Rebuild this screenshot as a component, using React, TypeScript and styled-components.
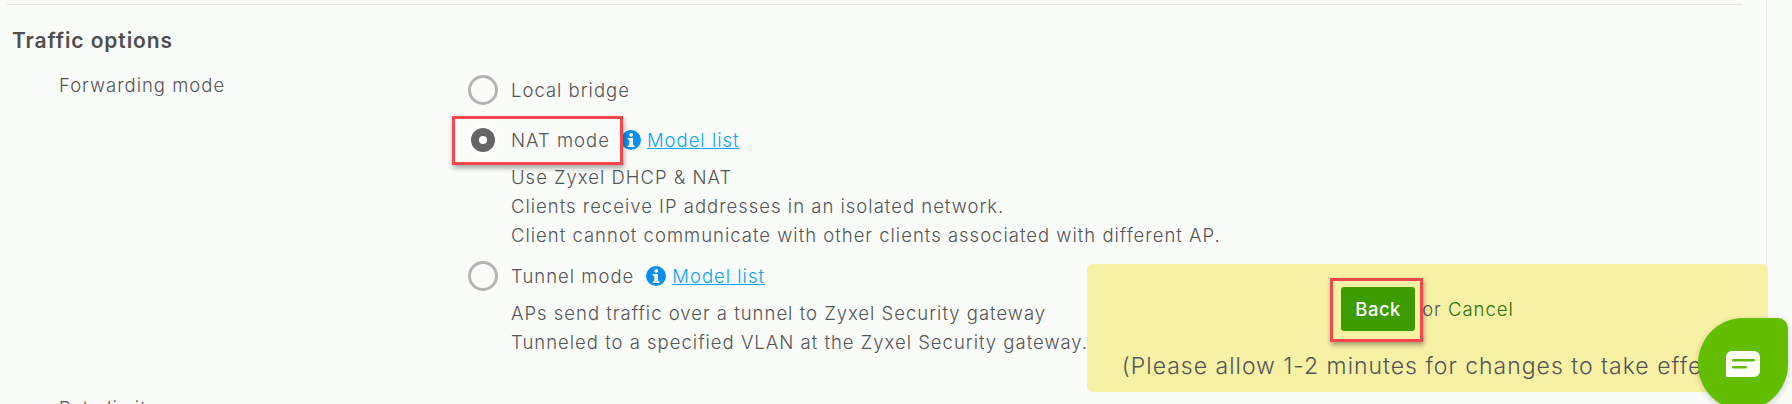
import React from 'react';
import styled, {createGlobalStyle} from 'styled-components';

const GlobalStyle = createGlobalStyle`
  html, body {
    margin: 0;
    padding: 0;
    height: 404px;
    overflow: hidden;
    background: #fafcfa;
  }
  body {
    font-family: 'Inter', 'Liberation Sans', sans-serif;
    font-weight: 300;
    color: #555;
    letter-spacing: 1px;
  }
`;

const Page = styled.div`
  position: relative;
  width: 1792px;
  height: 404px;
  overflow: hidden;
  background: #fafcfa;
`;

const Content = styled.main`
  width: 1767px;
  height: 404px;
  border-right: 1px solid #eceeec;
  padding: 4px 24px 0 7px;
  box-sizing: border-box;
  hr {
    margin: 0;
    border: none;
    border-top: 1px solid #e4e6e4;
  }
`;

const Title = styled.h3`
  margin: 22px 0 0 5px;
  font-size: 21px;
  line-height: 28px;
  font-weight: 600;
  letter-spacing: 0.9px;
  color: #4f4f4f;
`;

const FieldRow = styled.section<{$top: number}>`
  display: grid;
  grid-template-columns: 461px 1fr;
  margin-top: ${p => p.$top}px;
`;

const FieldLabel = styled.div`
  padding-left: 52px;
  font-size: 18.5px;
  line-height: 20px;
`;

const Options = styled.div`
  display: flex;
  flex-direction: column;
`;

const Option = styled.div<{$top?: number}>`
  position: relative;
  display: flex;
  align-items: center;
  height: 30px;
  margin-top: ${p => p.$top || 0}px;
  font-size: 18.5px;
`;

const Radio = styled.span<{$checked?: boolean}>`
  box-sizing: border-box;
  width: 30px;
  height: 30px;
  margin-right: 13px;
  flex: none;
  border-radius: 50%;
  border: ${p => (p.$checked ? '3px solid #fff' : '3px solid #b4b4b4')};
  background: ${p => (p.$checked ? '#666' : 'transparent')};
  display: flex;
  align-items: center;
  justify-content: center;
  &::after {
    content: '';
    display: ${p => (p.$checked ? 'block' : 'none')};
    width: 8px;
    height: 8px;
    border-radius: 50%;
    background: #fff;
  }
`;

const InfoIcon = styled.svg<{$left: number}>`
  width: 20px;
  height: 20px;
  margin-left: ${p => p.$left}px;
  flex: none;
`;

const ModelLink = styled.a`
  margin-left: 6px;
  color: #0aa5f5;
  text-decoration: underline;
  font-size: 18.5px;
`;

const Notes = styled.div<{$top: number}>`
  margin: ${p => p.$top}px 0 0 43px;
  font-size: 18.5px;
  line-height: 29px;
`;

const Highlight = styled.span<{$inset: string}>`
  position: absolute;
  inset: ${p => p.$inset};
  border: 3px solid #f9464b;
  box-shadow: 1px 3px 5px rgba(0, 0, 0, 0.35);
  pointer-events: none;
`;

const SaveBar = styled.div`
  position: absolute;
  left: 1087px;
  top: 264px;
  width: 681px;
  height: 128px;
  border-radius: 6px;
  background: #f7f1a6;
  display: flex;
  flex-direction: column;
  align-items: center;
`;

const SaveActions = styled.div`
  display: flex;
  align-items: center;
  margin-top: 23px;
  font-size: 18.5px;
  span a {
    color: #2a7000;
  }
`;

const BackButton = styled.button`
  position: relative;
  width: 74px;
  height: 44px;
  margin-right: 7px;
  border: none;
  border-radius: 3px;
  background: #3c9c00;
  color: #fff;
  font: 500 18.5px 'Inter', 'Liberation Sans', sans-serif;
  letter-spacing: 0.5px;
`;

const Notice = styled.div`
  margin-top: 19px;
  font-size: 23px;
  line-height: 32px;
  white-space: nowrap;
`;

const ChatBubble = styled.div`
  position: absolute;
  left: 1698px;
  top: 318px;
  width: 90px;
  height: 92px;
  border-radius: 50% 10px 50% 50%;
  background: #63bd00;
  box-shadow: 0 2px 6px rgba(0, 0, 0, 0.2);
  display: flex;
  align-items: center;
  justify-content: center;
`;

function Info({left}: {left: number}) {
  return (
    <InfoIcon $left={left} viewBox="0 0 20 20">
      <circle cx="10" cy="10" r="10" fill="#0a8fef" />
      <circle cx="10.2" cy="4.8" r="1.9" fill="#fff" />
      <path d="M6.8 8h5.2v7.2h1.4V17H6.8v-1.8h1.5V9.8H6.8z" fill="#fff" />
    </InfoIcon>
  );
}

export default function App() {
  return (
    <Page>
      <GlobalStyle />
      <Content>
        <hr />
        <Title>Traffic options</Title>
        <FieldRow $top={20}>
          <FieldLabel>Forwarding mode</FieldLabel>
          <Options>
            <Option>
              <Radio />
              Local bridge
            </Option>
            <Option $top={20}>
              <Radio $checked />
              NAT mode
              <Info left={11} />
              <ModelLink>Model list</ModelLink>
              <Highlight $inset="-9px auto -10px -16px" style={{width: 165}} />
            </Option>
            <Notes $top={8}>
              Use Zyxel DHCP &amp; NAT<br />
              Clients receive IP addresses in an isolated network.<br />
              Client cannot communicate with other clients associated with different AP.
            </Notes>
            <Option $top={11}>
              <Radio />
              Tunnel mode
              <Info left={12} />
              <ModelLink>Model list</ModelLink>
            </Option>
            <Notes $top={8}>
              APs send traffic over a tunnel to Zyxel Security gateway<br />
              Tunneled to a specified VLAN at the Zyxel Security gateway.
            </Notes>
          </Options>
        </FieldRow>
        <FieldRow $top={41}>
          <FieldLabel>Rate limit</FieldLabel>
        </FieldRow>
      </Content>
      <SaveBar>
        <SaveActions>
          <BackButton>
            Back
            <Highlight $inset="-9px -8px -11px -11px" />
          </BackButton>
          <span>or <a>Cancel</a></span>
        </SaveActions>
        <Notice>(Please allow 1-2 minutes for changes to take effect)</Notice>
      </SaveBar>
      <ChatBubble>
        <svg width="34" height="26" viewBox="0 0 34 26">
          <path d="M6 0h22a6 6 0 0 1 6 6v14a6 6 0 0 1-6 6H0V6a6 6 0 0 1 6-6z" fill="#fff" />
          <rect x="6" y="8" width="23" height="2.6" rx="1.3" fill="#63bd00" />
          <rect x="6" y="15" width="15" height="2.6" rx="1.3" fill="#63bd00" />
        </svg>
      </ChatBubble>
    </Page>
  );
}
